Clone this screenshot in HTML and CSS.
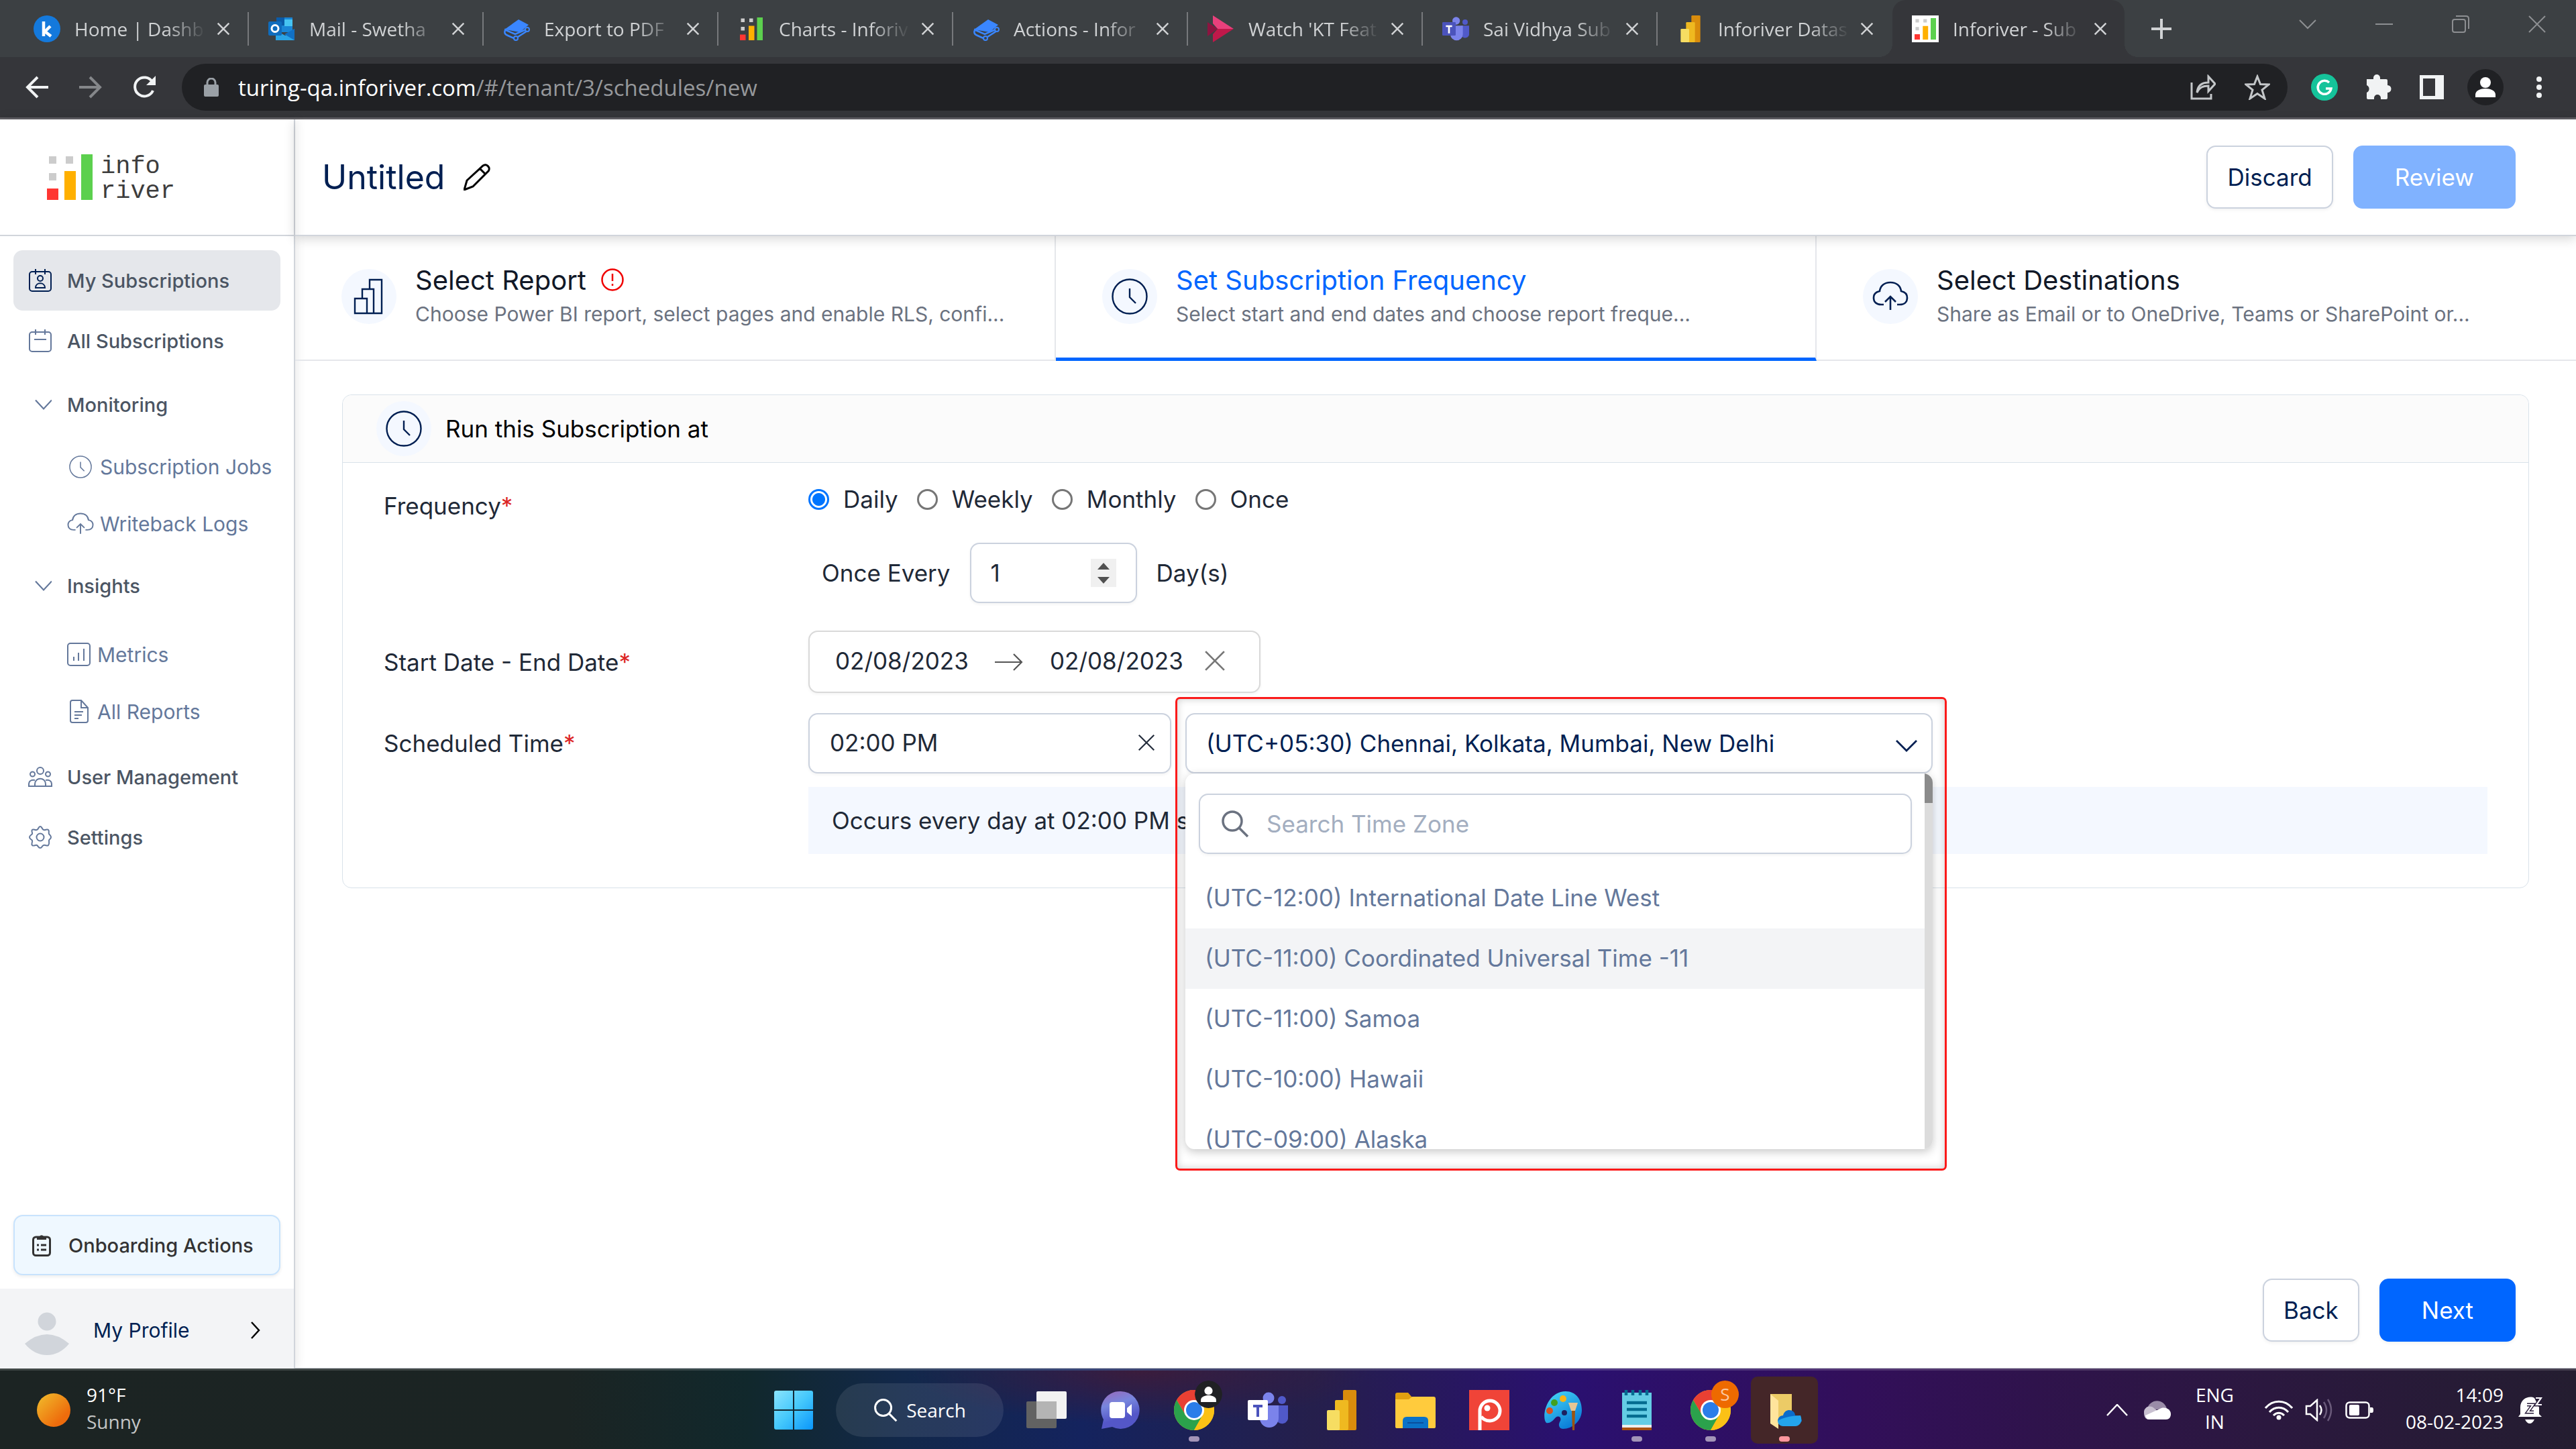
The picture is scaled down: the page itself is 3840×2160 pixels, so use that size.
FILE: index.html
```html
<!DOCTYPE html>
<html lang="en">
<head>
<meta charset="utf-8">
<title>Inforiver - Subscriptions</title>
<link rel="stylesheet" href="styles.css">
</head>
<body>
<svg class="defs" aria-hidden="true">
  <symbol id="x" viewBox="0 0 24 24"><path d="M2 2l20 20M22 2L2 22" fill="none" stroke="currentColor" stroke-width="3"/></symbol>
  <symbol id="thin-x" viewBox="0 0 30 30"><path d="M2 2l26 26M28 2L2 28" fill="none" stroke="currentColor" stroke-width="2.6"/></symbol>
  <symbol id="chev" viewBox="0 0 34 34"><path d="M25 10.500l12 13 12-13" transform="translate(-17 0)" fill="none" stroke="currentColor" stroke-width="2.200"/></symbol>
  <symbol id="clock" viewBox="0 0 54 54"><circle cx="27" cy="27" r="25.500" fill="none" stroke="currentColor" stroke-width="2.400"/><path d="M27 15v13l9 9" fill="none" stroke="currentColor" stroke-width="2.400"/></symbol>
  <symbol id="cloud" viewBox="0 0 54 54"><path d="M17 39h-4C6 39 2 35 2 29c0-6 4-9 9-10C12 11 18 6 27 6s15 5 16 13c5 1 9 4 9 10 0 6-4 10-11 10h-4" fill="none" stroke="currentColor" stroke-width="2.600"/><path d="M27 47V27m-8 8l8-8 8 8" fill="none" stroke="currentColor" stroke-width="2.600"/></symbol>
  <symbol id="cube" viewBox="0 0 40 40"><path d="M23 6L38 14 25 25 2 21z" fill="#3a86ff"/><path d="M2 21l16 7 16-7M4 20c-3 5-2 8 3 10l9 4M36 17l1 4M36 23l-14 9" fill="none" stroke="#3a86ff" stroke-width="2.500"/><circle cx="36" cy="21" r="3" fill="#3c4043" stroke="#3a86ff" stroke-width="2"/><circle cx="19" cy="34" r="3" fill="#3c4043" stroke="#3a86ff" stroke-width="2"/></symbol>
  <symbol id="bars" viewBox="0 0 68 68"><path fill="#ccc" d="M3 3h11v11H3zM28 3h11v11H28zM3 28h11v11H3z"/><path fill="#ff3632" d="M0 51h17v17H0z"/><path fill="#ffb000" d="M26 25h17v43H26z"/><path fill="#5cd04e" d="M51 0h17v68H51z"/></symbol>
  <symbol id="teams" viewBox="0 0 60 60"><circle cx="51" cy="15" r="6" fill="#5059c9"/><path fill="#5059c9" d="M42 23h18v16a9 9 0 01-18 4z"/><circle cx="31" cy="12" r="8.500" fill="#7b83eb"/><path fill="#7b83eb" d="M18 23h28v19a14 14 0 01-28 0z"/><rect y="15" width="30" height="30" rx="2" fill="var(--tile)"/><path d="M8 22h14v4h-5v14h-4V26H8z" fill="var(--letter)"/></symbol>
  <symbol id="pbi" viewBox="0 0 60 60"><rect x="32" width="20" height="60" rx="2" fill="#d98c0c"/><rect x="20" y="15" width="20" height="45" rx="2" fill="#efb920"/><rect x="8" y="30" width="19" height="30" rx="2" fill="#f6dd62"/></symbol>
  <symbol id="chrome" viewBox="0 0 60 60"><circle cx="30" cy="30" r="30" fill="#fbc116"/><path fill="#e94033" d="M30 30H56L56 15A30 30 0 004 15L17 37z"/><path fill="#2ba24c" d="M30 30L17 37 4 15A30 30 0 0030 60L43 37z"/><path fill="#fbc116" d="M30 60L43 37 43 15H56A30 30 0 0130 60z"/><circle cx="30" cy="30" r="15" fill="#fff"/><circle cx="30" cy="30" r="12" fill="#2b7de9"/></symbol>
  <symbol id="mag" viewBox="0 0 42 42"><circle cx="17" cy="17" r="14" fill="none" stroke="currentColor" stroke-width="3.500"/><path d="M27 27l13 13" stroke="currentColor" stroke-width="3.500"/></symbol>
  <symbol id="person" viewBox="0 0 54 54"><circle cx="27" cy="27" r="27" fill="#202124"/><circle cx="27" cy="20" r="8" fill="#fff"/><path d="M12 42v-4c0-6 8-9 15-9s15 3 15 9v4z" fill="#fff"/></symbol>
</svg>

<header class="browser">
  <div class="tabstrip">
    <div class="tab"><svg class="fav" viewBox="0 0 40 40"><circle cx="20" cy="20" r="20" fill="#1479dc"/><path d="M15 9v22M25 16l-8 8 9 7" fill="none" stroke="#fff" stroke-width="4.500"/></svg><span>Home | Dashb</span><button aria-label="Close tab"><svg><use href="#x"/></svg></button></div>
    <div class="tab"><svg class="fav" viewBox="0 0 40 40"><path fill="#1a86d6" d="M12 3h24v22H12z"/><path fill="#46c4f2" d="M24 6h12v10H24z"/><path fill="#0a5ba8" d="M12 3h12v12H12z"/><path fill="#2aa4e6" d="M11 22l14 8 14-10v17H11z"/><path fill="#1170c4" d="M39 20v17L24 28z"/><rect y="9" width="20" height="21" rx="2" fill="#0f6cbd"/><circle cx="10" cy="19.500" r="5" fill="none" stroke="#fff" stroke-width="3"/></svg><span>Mail - Swetha</span><button aria-label="Close tab"><svg><use href="#x"/></svg></button></div>
    <div class="tab"><svg class="fav"><use href="#cube"/></svg><span>Export to PDF</span><button aria-label="Close tab"><svg><use href="#x"/></svg></button></div>
    <div class="tab"><svg class="fav small"><use href="#bars"/></svg><span>Charts - Inforiv</span><button aria-label="Close tab"><svg><use href="#x"/></svg></button></div>
    <div class="tab"><svg class="fav"><use href="#cube"/></svg><span>Actions - Infor</span><button aria-label="Close tab"><svg><use href="#x"/></svg></button></div>
    <div class="tab"><svg class="fav" viewBox="0 0 40 40"><path fill="#e8407c" d="M8 0l31 20H15L8 12z"/><path fill="#c0184a" d="M39 20L8 40V28l7-8z"/><path fill="#8c1440" d="M0 10l15 10L0 31z"/></svg><span>Watch 'KT Feat</span><button aria-label="Close tab"><svg><use href="#x"/></svg></button></div>
    <div class="tab"><svg class="fav"><use href="#teams"/></svg><span>Sai Vidhya Sub</span><button aria-label="Close tab"><svg><use href="#x"/></svg></button></div>
    <div class="tab last"><svg class="fav"><use href="#pbi"/></svg><span>Inforiver Datas</span><button aria-label="Close tab"><svg><use href="#x"/></svg></button></div>
    <div class="tab active"><svg class="fav boxed"><use href="#bars"/></svg><span>Inforiver - Sub</span><button aria-label="Close tab"><svg><use href="#x"/></svg></button></div>
    <button class="newtab" aria-label="New tab"><svg viewBox="0 0 30 30"><path d="M15 0v30M0 15h30" stroke="currentColor" stroke-width="4"/></svg></button>
    <div class="wincontrols">
      <button aria-label="Search tabs"><svg viewBox="0 0 26 26"><path d="M1 7l12 12L25 7"/></svg></button>
      <button aria-label="Minimize"><svg viewBox="0 0 26 26"><path d="M0 13h26"/></svg></button>
      <button aria-label="Restore"><svg viewBox="0 0 26 26"><rect x="1" y="6" width="19" height="19" rx="3"/><path d="M6 1h15q4 0 4 4v15"/></svg></button>
      <button aria-label="Close"><svg viewBox="0 0 26 26"><path d="M1 1l24 24M25 1L1 25"/></svg></button>
    </div>
  </div>
  <div class="toolbar">
    <div class="navbtns">
      <button aria-label="Back"><svg viewBox="0 0 34 34"><path d="M34 17H3M18 2L3 17l15 15" fill="none" stroke="currentColor" stroke-width="4"/></svg></button>
      <button class="dim" aria-label="Forward"><svg viewBox="0 0 34 34"><path d="M0 17h31M16 2l15 15-15 15" fill="none" stroke="currentColor" stroke-width="4"/></svg></button>
      <button aria-label="Reload"><svg viewBox="0 0 34 34"><path d="M29 9A14 14 0 1030 22" fill="none" stroke="currentColor" stroke-width="4"/><path d="M34 0v14H20z" fill="currentColor"/></svg></button>
    </div>
    <div class="omnibox">
      <svg class="lock" viewBox="0 0 22 28"><rect y="10" width="22" height="18" rx="2" fill="#9aa0a6"/><path d="M5 11V7a6 6 0 0112 0v4" fill="none" stroke="#9aa0a6" stroke-width="3"/></svg>
      <p class="url">turing-qa.inforiver.com<span>/#/tenant/3/schedules/new</span></p>
      <button aria-label="Share"><svg viewBox="0 0 38 38"><path d="M2 12v24h29v-7M10 27c1-10 7-15 17-15V3l10 11-10 11v-8c-8 0-13 2-17 10z" fill="none" stroke="currentColor" stroke-width="3"/></svg></button>
      <button aria-label="Bookmark"><svg viewBox="0 0 38 38"><path d="M19 3l4.500 11.500L36 15l-10 8 4 13-11-7.500L8 36l4-13-10-8 12.500-.5z" fill="none" stroke="currentColor" stroke-width="3"/></svg></button>
    </div>
    <div class="exts">
      <svg viewBox="0 0 40 40"><circle cx="20" cy="20" r="20" fill="#15c39a"/><path d="M27 13a10 10 0 103 9h-8" fill="none" stroke="#fff" stroke-width="3.500"/></svg>
      <svg viewBox="0 0 40 40"><path fill="#f1f3f4" d="M3 8h10V6a5 5 0 0110 0v2h9q2 0 2 2v7a5.500 5.500 0 010 11v8q0 2-2 2h-8v-2a5 5 0 00-10 0v2H5q-2 0-2-2v-8a6 6 0 000-11z"/></svg>
      <svg viewBox="0 0 40 40"><path fill="#f1f3f4" fill-rule="evenodd" d="M2 2h36v36H2zM7 7v26h18V7z"/></svg>
      <svg class="me"><use href="#person"/></svg>
      <svg viewBox="0 0 40 40"><g fill="#f1f3f4"><circle cx="20" cy="8" r="4"/><circle cx="20" cy="20" r="4"/><circle cx="20" cy="32" r="4"/></g></svg>
    </div>
  </div>
</header>

<div class="app">
  <aside class="sidebar">
    <a class="brand" href="#"><svg><use href="#bars"/></svg><span>info<br>river</span></a>
    <nav>
      <a class="item current" href="#"><svg viewBox="0 0 34 34"><g fill="none" stroke="#001f52" stroke-width="2"><rect x="1" y="4" width="32" height="29" rx="4"/><path d="M10 0v8M24 0v8M10 28c0-9 14-9 14 0z"/><circle cx="17" cy="14" r="4"/></g></svg>My Subscriptions</a>
      <a class="item" href="#"><svg viewBox="0 0 34 34"><g fill="none" stroke="currentColor" stroke-width="2"><rect x="1" y="4" width="32" height="29" rx="4"/><path d="M10 0v8M24 0v8M8 15h18"/></g></svg>All Subscriptions</a>
      <button class="item group"><svg><use href="#chev" x="2"/></svg>Monitoring</button>
      <div class="sub">
        <a href="#"><svg class="ic34"><use href="#clock"/></svg>Subscription Jobs</a>
        <a href="#"><svg><use href="#cloud"/></svg>Writeback Logs</a>
      </div>
      <button class="item"><svg><use href="#chev" x="2"/></svg>Insights</button>
      <div class="sub spaced">
        <a href="#"><svg viewBox="0 0 36 36"><g fill="none" stroke="currentColor" stroke-width="2"><rect x="1" y="1" width="33" height="33" rx="4"/><path d="M10 27v-6M17 27V15M25 27V9"/></g></svg>Metrics</a>
        <a href="#"><svg viewBox="0 0 36 36"><g fill="none" stroke="currentColor" stroke-width="2"><path d="M8 1h13l10 11v19q0 3-3 3H8q-3 0-3-3V4q0-3 3-3zM21 1v11h10M11 18h13M11 23h11M11 28h6"/></g></svg>All Reports</a>
      </div>
      <a class="item" href="#"><svg class="wide" viewBox="0 0 36 30"><g fill="none" stroke="currentColor" stroke-width="2"><circle cx="18" cy="6" r="5"/><circle cx="6.500" cy="11" r="3.500"/><circle cx="29.500" cy="11" r="3.500"/><path d="M10 29v-3c0-11 16-11 16 0v3zM10 29H1v-3c0-5 4-7 9-6M26 29h9v-3c0-5-4-7-9-6"/></g></svg>User Management</a>
      <a class="item" href="#"><svg viewBox="0 0 34 34"><g fill="none" stroke="currentColor" stroke-width="2"><path d="M17 1c3 0 2 4 5 5s5-2 7 0 0 4 1 6 3 2 3 5-3 3-3 5 1 5-1 7-4-1-7 0-2 4-5 4-3-3-5-4-5 2-7 0 1-5 0-7-4-2-4-5 3-3 4-5-2-4 0-6 4 1 7 0 2-5 5-5z"/><circle cx="17" cy="17" r="5.500"/></g></svg>Settings</a>
    </nav>
    <button class="onboard"><svg viewBox="0 0 28 34"><rect x="1.500" y="5" width="25" height="27.500" rx="4" fill="none" stroke="#333" stroke-width="3"/><path d="M7 4h4a3.500 3.500 0 016 0h4v5H7z" fill="#333"/><path d="M7 17h3m3 0h8M7 24h3m3 0h8" stroke="#333" stroke-width="3"/></svg>Onboarding Actions</button>
    <button class="profile"><svg class="avatar" viewBox="0 0 66 66"><circle cx="33" cy="14" r="13.500" fill="#d1d5db"/><path d="M0 47q33-28 66 0-14 17-33 17T0 47z" fill="#d1d5db"/></svg><span>My Profile</span><svg class="go" viewBox="0 0 14 26"><path d="M1 1l11 12L1 25" fill="none" stroke="#000" stroke-width="2.500"/></svg></button>
  </aside>

  <main>
    <div class="titlebar">
      <h1>Untitled</h1>
      <button class="edit" aria-label="Rename"><svg viewBox="0 0 40 40"><path d="M1 39l4-14L29 3c5-4 12 3 8 8L14 34zM24 7l9 9" fill="none" stroke="#000" stroke-width="3"/></svg></button>
      <button class="btn end">Discard</button>
      <button class="btn primary faded" disabled>Review</button>
    </div>

    <div class="steps">
      <a class="step" href="#"><span class="bubble"><svg viewBox="0 0 54 54"><g fill="none" stroke="currentColor" stroke-width="2.400"><path d="M6 30h18v22H6z M17 30V16h17v36M28 16V2h18v50H24"/></g></svg></span><span class="txt"><strong>Select Report <svg viewBox="0 0 34 34"><circle cx="17" cy="17" r="15.500" fill="none" stroke="#f00000" stroke-width="2.500"/><path d="M17 8v11m0 4v3" stroke="#f00000" stroke-width="2.500"/></svg></strong><small>Choose Power BI report, select pages and enable RLS, confi...</small></span></a>
      <a class="step on" href="#"><span class="bubble"><svg><use href="#clock"/></svg></span><span class="txt"><strong>Set Subscription Frequency</strong><small>Select start and end dates and choose report freque...</small></span></a>
      <a class="step" href="#"><span class="bubble"><svg><use href="#cloud"/></svg></span><span class="txt"><strong>Select Destinations</strong><small>Share as Email or to OneDrive, Teams or SharePoint or...</small></span></a>
    </div>

    <section class="card">
      <div class="cardhead"><span class="bubble"><svg><use href="#clock"/></svg></span><h2>Run this Subscription at</h2></div>
      <form class="fields">
        <span class="label first">Frequency<b>*</b></span>
        <div>
          <div class="radios">
            <label><input type="radio" name="freq" checked>Daily</label>
            <label><input type="radio" name="freq">Weekly</label>
            <label><input type="radio" name="freq">Monthly</label>
            <label><input type="radio" name="freq">Once</label>
          </div>
          <div class="every">
            <label for="every">Once Every</label>
            <div class="box number"><input id="every" type="text" value="1"><span class="spin"><button type="button" aria-label="Increase"></button><button type="button" aria-label="Decrease"></button></span></div>
            <span>Day(s)</span>
          </div>
        </div>
        <label class="label dates" for="start">Start Date - End Date<b>*</b></label>
        <div class="box range">
          <input id="start" type="text" value="02/08/2023">
          <svg class="arrow" viewBox="0 0 42 26"><path d="M0 13h40M28 1l12 12-12 12" fill="none" stroke="#555" stroke-width="2.200"/></svg>
          <input type="text" value="02/08/2023" aria-label="End date">
          <button type="button" class="clear" aria-label="Clear dates"><svg><use href="#thin-x"/></svg></button>
        </div>
        <label class="label" for="time">Scheduled Time<b>*</b></label>
        <div class="when">
          <div class="box time"><input id="time" type="text" value="02:00 PM"><button type="button" class="clear dark" aria-label="Clear time"><svg><use href="#thin-x"/></svg></button></div>
          <div class="zone">
            <select class="box" aria-label="Time zone"><option>(UTC+05:30) Chennai, Kolkata, Mumbai, New Delhi</option></select>
            <svg class="zchev" viewBox="0 0 32 18"><path d="M1 1l15 15L31 1" fill="none" stroke="#001f52" stroke-width="2.800"/></svg>
            <div class="menu">
              <div class="scroll">
                <label class="box search"><svg><use href="#mag"/></svg><input type="text" placeholder="Search Time Zone" aria-label="Search Time Zone"></label>
                <ul role="listbox" aria-label="Time zones">
                  <li role="option">(UTC-12:00) International Date Line West</li>
                  <li role="option" class="hover">(UTC-11:00) Coordinated Universal Time -11</li>
                  <li role="option">(UTC-11:00) Samoa</li>
                  <li role="option">(UTC-10:00) Hawaii</li>
                  <li role="option">(UTC-09:00) Alaska</li>
                </ul>
              </div>
              <span class="track"></span>
            </div>
            <span class="callout"></span>
          </div>
        </div>
        <p class="summary">Occurs every day at 02:00 PM s</p>
      </form>
    </section>

    <div class="actions">
      <button class="btn">Back</button>
      <button class="btn primary next">Next</button>
    </div>
  </main>
</div>

<footer class="taskbar">
  <button class="weather"><svg viewBox="0 0 50 50"><defs><linearGradient id="sun" x1="0" y1="0" x2="1" y2="1"><stop offset=".1" stop-color="#f0b428"/><stop offset=".75" stop-color="#ee6c0c"/></linearGradient></defs><circle cx="25" cy="25" r="25" fill="url(#sun)"/></svg><span>91°F<br><i>Sunny</i></span></button>
  <div class="dock">
    <button aria-label="Start"><svg viewBox="0 0 60 60"><defs><linearGradient id="win" x1="0" y1="0" x2="1" y2="1"><stop offset="0" stop-color="#8ae4fd"/><stop offset=".5" stop-color="#45c8fc"/><stop offset="1" stop-color="#0a96fb"/></linearGradient></defs><path fill="url(#win)" d="M1 4q0-3 3-3h25v28H1zM31 1h25q3 0 3 3v25H31zM1 31h28v28H4q-3 0-3-3zM31 31h28v25q0 3-3 3H31z"/></svg></button>
    <button class="find"><svg><use href="#mag"/></svg>Search</button>
    <button aria-label="Task view"><svg viewBox="0 0 60 60"><rect x="15" y="2" width="45" height="41" rx="2" fill="#f2f2f2"/><rect y="17" width="45" height="40" rx="2" fill="#626262"/><path fill="#b4b4b4" d="M15 17h30v26H15z"/></svg></button>
    <button aria-label="Chat"><svg viewBox="0 0 60 60"><defs><linearGradient id="chat" x1="0" y1="0" x2=".3" y2="1"><stop offset="0" stop-color="#9a68b8"/><stop offset=".4" stop-color="#7786de"/><stop offset=".8" stop-color="#5457c8"/></linearGradient></defs><path fill="url(#chat)" d="M30 2a28 28 0 11-12 53L2 58l3-14A28 28 0 0130 2z"/><rect x="14" y="18" width="23" height="24" rx="4" fill="#fff"/><path fill="#fff" d="M40 27l7-6v18l-7-6z"/></svg></button>
    <button class="open" aria-label="Chrome"><svg><use href="#chrome"/></svg><svg class="badge"><use href="#person"/></svg></button>
    <button class="teams-task" aria-label="Teams"><svg><use href="#teams"/></svg></button>
    <button aria-label="Power BI"><svg><use href="#pbi"/></svg></button>
    <button aria-label="File Explorer"><svg viewBox="0 0 60 60"><path fill="#e0a010" d="M0 7q0-3 3-3h16l6 7h33v9H0z"/><path fill="#ffcb3d" d="M0 14h20l5-4h32q3 0 3 3v42q0 2-3 2H3q-3 0-3-2z"/><path fill="#0a72c8" d="M11 57V46q0-6 6-6h26q6 0 6 6v11z"/><path fill="#0a4f9c" d="M18 48h24v2H18z"/></svg></button>
    <button aria-label="PicPick"><svg viewBox="0 0 60 60"><path fill="#f04438" d="M0 0h60v60H0z"/><path d="M16 60V31a15 15 0 1115 15c-7 0-10-3-13-6" fill="none" stroke="#fff" stroke-width="5"/><circle cx="27" cy="27" r="4.500" fill="#fff"/></svg></button>
    <button aria-label="Paint"><svg viewBox="0 0 60 60"><defs><linearGradient id="pal" x1="0" y1="0" x2=".6" y2="1"><stop offset="0" stop-color="#4adcf8"/><stop offset="1" stop-color="#0a7cd8"/></linearGradient></defs><path fill="url(#pal)" d="M34 2c15 0 24 12 24 28S44 58 30 58c-6 0-8-6-4-12 2-6-3-8-7-5-5 6-9 9-14 8C-3 40 6 2 34 2z"/><circle cx="30" cy="13" r="5" fill="#f8b414"/><circle cx="17" cy="19" r="5" fill="#42a020"/><circle cx="10" cy="31" r="5" fill="#d85020"/><circle cx="32" cy="34" r="4" fill="#1c2060"/><path fill="#e6c694" d="M38 19h14l-4 12h-6z"/><path fill="#9c5410" d="M43 31h5l-1 29h-3z"/></svg></button>
    <button class="open" aria-label="Notepad"><svg viewBox="0 0 60 60"><path fill="#64cce4" d="M8 4h44v50H8z"/><path fill="#eee" d="M8 52h44v4H8z"/><path fill="#a85010" d="M8 56h44v4H8z"/><path d="M14 0v8m10-8v8m11-8v8m10-8v8M15 19h30M15 29h30M15 39h30" stroke="#046c90" stroke-width="4.500"/></svg></button>
    <button class="open" aria-label="Chrome, second profile"><svg><use href="#chrome"/></svg><span class="badge s">S</span></button>
    <button class="open focus" aria-label="OneDrive folder"><svg viewBox="0 0 60 60"><path fill="#eccb66" d="M9 6h32v42H18z"/><path fill="#ffe49c" d="M9 6l12 10v42L9 50z"/><path fill="#0a6ccc" d="M20 47c0-6 4-9 8-9 3-12 18-9 18 0 6 0 10 4 10 9z"/><path fill="#24a4ec" d="M20 46c6-4 20-8 34-8 4 10-2 16-8 16H28c-5 0-8-4-8-8z"/></svg></button>
  </div>
  <div class="tray">
    <svg class="t32" viewBox="0 0 32 18"><path d="M1 17L16 1l15 16" fill="none" stroke="#fff" stroke-width="2.500"/></svg>
    <svg class="t40" viewBox="0 0 40 28"><path fill="#9a8ca8" d="M4 14C8-4 30-4 34 12z"/><path fill="#c8c0d0" d="M0 17c0-8 10-12 16-5l8 6-18 10c-4-1-6-4-6-11z"/><path fill="#fff" d="M2 22l24-11c8-2 14 3 14 9 0 5-3 8-7 8H8c-3 0-5-2-6-6z"/></svg>
    <span class="lang">ENG<br>IN</span>
    <svg class="t42" viewBox="0 0 42 30"><g fill="none" stroke="#fff" stroke-width="3"><path d="M1 12C12-1 30-1 41 12M7 18c8-9 20-9 28 0M13 23c5-5 11-5 16 0"/></g><circle cx="21" cy="26" r="3.500" fill="#fff"/></svg>
    <svg class="t42" viewBox="0 0 42 34"><path d="M2 11h6l10-9v30l-10-9H2z" fill="none" stroke="#fff" stroke-width="2.500"/><path d="M22 10q5 7 0 14" fill="none" stroke="#fff" stroke-width="2.500"/><path d="M28 5q8 12 0 24M34 1q10 16 0 32" fill="none" stroke="#6a5a7a" stroke-width="2.500"/></svg>
    <svg class="t42" viewBox="0 0 42 26"><rect x="1.500" y="1.500" width="34" height="23" rx="5" fill="none" stroke="#fff" stroke-width="2.500"/><rect x="6" y="5" width="15" height="16" rx="2" fill="#fff"/><path fill="#fff" d="M37 9h3q2 0 2 4t-2 4h-3z"/></svg>
    <span class="clock">14:09<br>08-02-2023</span>
    <svg class="t36" viewBox="0 0 36 40"><path fill="#fff" d="M3 18C2 2 17-2 24 2l7 14v10l4 4H0l3-4zM10 34h14q-3 6-7 6t-7-6z"/><path d="M13 12h9l-8 11h9M26 2h8l-7 10h8" fill="none" stroke="#271a38" stroke-width="5"/><path d="M13 12h9l-8 11h9M26 2h8l-7 10h8" fill="none" stroke="#fff" stroke-width="2.200"/></svg>
  </div>
</footer>
</body>
</html>
```
FILE: styles.css
```css
* { box-sizing: border-box; }
body {
  margin: 0;
  min-height: 100vh;
  display: flex;
  flex-direction: column;
  background: #fff;
  font-family: Inter, "Liberation Sans", sans-serif;
  font-size: 35px;
  color: #1f2937;
  --tile: #4b53bc;
  --letter: #fff;
}
button, input, select { font: inherit; color: inherit; border: 0; background: none; padding: 0; margin: 0; }
a { color: inherit; text-decoration: none; }
svg { display: block; flex: none; }
h1, h2, p, ul { margin: 0; padding: 0; font-weight: 400; }
.defs { position: absolute; width: 0; height: 0; }

/* Browser window */
.browser { font-family: "Open Sans", "Noto Sans", sans-serif; color: #d0d2d4; border-bottom: 3px solid #5f5e63; }
.tabstrip { display: flex; align-items: center; height: 85px; padding-left: 21px; background: #3c4043; font-size: 28px; }
.tab { display: flex; align-items: center; width: 350px; height: 50px; padding: 0 26px 0 29px; border-right: 2px solid #77797c; }
.tab span { flex: 1; margin: 0 16px 0 21px; overflow: hidden; white-space: nowrap; -webkit-mask-image: linear-gradient(90deg, #000 70%, transparent); mask-image: linear-gradient(90deg, #000 70%, transparent); }
.tab button svg { width: 20px; height: 20px; }
.tab.last { border-color: transparent; }
.tab.active { position: relative; width: 346px; height: 85px; border: 0; border-radius: 20px 20px 0 0; background: #35363a; }
.tab.active::before, .tab.active::after { content: ""; position: absolute; bottom: 0; width: 20px; height: 20px; }
.tab.active::before { left: -20px; background: radial-gradient(circle at 0 0, transparent 20px, #35363a 20px); }
.tab.active::after { right: -20px; background: radial-gradient(circle at 100% 0, transparent 20px, #35363a 20px); }
.fav { width: 40px; height: 40px; }
.fav.small { padding: 3px; }
.fav.boxed { padding: 4px; background: #fff; }
.teams-task { --tile: #fff; --letter: #4b53bc; }
.newtab { margin-left: 40px; }
.newtab svg { width: 30px; height: 30px; }
.wincontrols { display: flex; gap: 88px; margin: 0 45px 14px auto; }
.wincontrols svg { width: 26px; height: 26px; fill: none; stroke: #8d8f92; stroke-width: 2; }
.toolbar { display: flex; align-items: center; height: 90px; padding: 0 35px 0 38px; background: #35363a; }
.navbtns { display: flex; gap: 46px; width: 233px; color: #f1f3f4; }
.navbtns .dim { color: #85878a; }
.navbtns svg { width: 34px; height: 34px; }
.omnibox { flex: 1; display: flex; align-items: center; gap: 43px; height: 70px; padding: 0 26px 0 33px; border-radius: 35px; background: #202124; color: #c4c7c9; }
.omnibox button svg { width: 38px; height: 38px; }
.lock { width: 22px; height: 28px; }
.url { flex: 1; margin-left: -14px; font-size: 33px; color: #fff; }
.url span { color: #96989b; }
.exts { display: flex; align-items: center; gap: 40px; margin-left: 35px; }
.exts svg { width: 40px; height: 40px; }
.exts .me { width: 54px; height: 54px; margin: 0 -7px; }

/* App shell */
.app { flex: 1; display: flex; }
.sidebar { display: flex; flex-direction: column; width: 440px; border-right: 2px solid #d1d5db; box-shadow: 0 0 16px rgba(0, 0, 0, .12); }
.brand { display: flex; align-items: center; gap: 12px; height: 174px; padding: 0 70px; border-bottom: 2px solid #d1d5db; font: 37px/37px "Liberation Mono", monospace; color: #3d3d3d; }
.brand svg { width: 68px; height: 68px; }
.brand span { padding-top: 6px; }
nav { padding: 21px 20px 0; color: #64789b; }
.item { display: flex; align-items: center; gap: 23px; width: 100%; height: 90px; padding-left: 23px; border-radius: 14px; font-size: 29px; font-weight: 500; color: #4b5563; }
.item svg { width: 34px; height: 34px; color: #64789b; }
.item svg.wide { width: 38px; height: 30px; margin: 0 -2px; }
.current { background: #e5e7eb; }
.group { margin-top: 5px; }
.sub { padding: 5px 0; }
.sub a { display: flex; align-items: center; gap: 9px; height: 85px; padding-left: 80px; font-size: 30px; white-space: nowrap; }
.sub svg { width: 40px; height: 40px; }
.sub .ic34 { padding: 3px; }
.sub.spaced { padding: 15px 0 10px; }
.spaced svg { width: 36px; height: 36px; }
.onboard { display: flex; align-items: center; gap: 26px; height: 90px; margin: auto 20px 20px; padding-left: 26px; border: 2px solid #c8e3fd; border-radius: 14px; background: #eff8ff; box-shadow: 0 2px 5px rgba(0, 0, 0, .08); font-size: 29px; font-weight: 500; color: #333; white-space: nowrap; }
.onboard svg { width: 28px; height: 34px; }
.profile { display: flex; align-items: center; height: 119px; padding: 4px 50px 0 37px; background: #f3f4f6; font-size: 30px; color: #001f52; }
.profile .avatar { width: 66px; height: 66px; margin-top: 12px; }
.profile span { flex: 1; margin-left: 36px; text-align: left; }
.profile .go { width: 14px; height: 26px; }

main { flex: 1; display: flex; flex-direction: column; min-width: 0; border-bottom: 1px solid #c9ccd2; }
.titlebar { position: relative; display: flex; align-items: center; height: 174px; padding: 0 90px 0 40px; border-bottom: 2px solid #d1d5db; box-shadow: 0 4px 16px rgba(0, 0, 0, .16); color: #001f52; }
h1 { font-size: 50px; }
.edit { margin-left: 28px; }
.edit svg { width: 40px; height: 40px; }
.btn { height: 94px; padding: 0 29px; border: 2px solid #cbd2de; border-radius: 14px; box-shadow: 0 2px 5px rgba(0, 0, 0, .06); background: #fff; color: #001f52; }
.btn.primary { margin-left: 30px; padding: 0 60px; border-color: #06f; background: #06f; color: #fff; }
.btn.faded { border-color: #80b2ff; background: #80b2ff; box-shadow: none; }
.end { margin-left: auto; }
.steps { display: flex; }
.step { flex: 1; display: flex; align-items: flex-start; min-width: 0; height: 186px; padding: 49px 0 0 69px; border-right: 2px solid #e5e7eb; border-bottom: 2px solid #e5e7eb; }
.step:last-child { border-right: 0; }
.bubble { display: flex; align-items: center; justify-content: center; flex: none; width: 82px; height: 82px; border-radius: 50%; background: #f4f8ff; color: #001f52; }
.bubble svg { width: 54px; height: 54px; }
.txt { display: flex; flex-direction: column; margin-left: 28px; white-space: nowrap; }
.txt strong { display: flex; align-items: center; gap: 22px; height: 50px; margin-top: -9px; font-size: 40px; font-weight: 400; color: #111827; }
.txt strong svg { width: 34px; height: 34px; }
.txt small { height: 50px; line-height: 52px; font-size: 30px; color: #6b7280; }
.on { border-bottom: 5px solid #06f; }
.on .txt strong { color: #06f; }

/* Schedule form */
.card { margin: 50px 70px 0; border: 1px solid #d9e2ea; border-radius: 14px; }
.cardhead { display: flex; align-items: center; gap: 21px; height: 101px; padding-left: 50px; border-bottom: 1px solid #d9e2ea; border-radius: 14px 14px 0 0; background: #fbfbfb; color: #000; }
h2 { font-size: 35px; }
.fields { display: grid; grid-template-columns: 633px 1fr; align-items: center; padding: 26px 61px 50px; }
.label b { font-weight: 400; color: #dc2626; }
.first { align-self: start; line-height: 76px; }
.dates { padding-top: 12px; }
.radios { display: flex; gap: 28px; height: 56px; margin-bottom: 37px; }
.radios label { display: flex; align-items: center; gap: 21px; }
.radios input { appearance: none; width: 31px; height: 31px; border: 3px solid #767676; border-radius: 50%; }
.radios input:checked { border-color: #0075ff; background: radial-gradient(circle, #0075ff 9px, #fff 10px); }
.box { display: flex; align-items: center; height: 90px; border: 2px solid #cbd2de; border-radius: 14px; background: #fff; box-shadow: 0 2px 4px rgba(0, 0, 0, .05); }
.box input { flex: 1; min-width: 0; width: 0; outline: 0; }
.every { display: flex; align-items: center; gap: 29px; padding-left: 20px; }
.number { width: 249px; padding: 0 29px; }
.spin { display: flex; flex-direction: column; width: 38px; height: 42px; background: #f0f0f0; }
.spin button { flex: 1; display: flex; align-items: center; justify-content: center; }
.spin button::before { content: ""; border: 9px solid transparent; border-top: 0; border-bottom: 10px solid #505050; }
.spin button + button::before { border-top: 10px solid #505050; border-bottom: 0; }
.range { width: 674px; height: 93px; margin: 41px 0 30px; padding: 0 50px 4px 38px; border-color: #d9d9d9; }
.range input { flex: 0 0 200px; }
.arrow { width: 42px; height: 26px; margin: 4px 40px 0 38px; }
.clear { margin-left: auto; color: #777; }
.clear svg { width: 32px; height: 32px; }
.clear.dark { color: #27303f; }
.clear.dark svg { width: 26px; height: 26px; }
.when { display: flex; gap: 21px; }
.time { width: 541px; padding: 0 22px 2px 30px; }
.zone { position: relative; width: 1114px; }
.zone select { appearance: none; width: 100%; padding-left: 29px; color: #001f52; }
.zchev { position: absolute; right: 23px; top: 40px; width: 32px; height: 18px; }
.menu { position: absolute; z-index: 1; top: 90px; left: 0; right: 0; display: flex; height: 560px; overflow: hidden; border-radius: 14px; background: #fff; box-shadow: 0 4px 14px rgba(0, 0, 0, .22); color: #64789b; }
.scroll { flex: 1; }
.search { margin: 30px 19px 21px 20px; padding-left: 31px; gap: 26px; }
.search svg { width: 42px; height: 42px; color: #6b7280; }
.search input::placeholder { color: #a3aec0; opacity: 1; }
.menu ul { list-style: none; }
.menu li { height: 90px; padding-left: 29px; line-height: 88px; }
.menu .hover { background: #f3f4f6; }
.track { width: 12px; background: linear-gradient(#8b8b8b 44px, #dcdcdc 44px); }
.callout { position: absolute; z-index: 2; top: -24px; left: -15px; right: -21px; height: 706px; border: 3px solid #fb1a1a; border-radius: 7px; box-shadow: inset 0 0 12px rgba(0, 0, 0, .2); pointer-events: none; }
.summary { grid-column: 2; height: 100px; margin-top: 20px; padding-left: 35px; line-height: 100px; background: #f4f8ff; }
.actions { display: flex; justify-content: flex-end; margin-top: auto; padding: 0 90px 39px; }
.actions .btn.primary { padding: 0 61px; }

/* Desktop taskbar */
.taskbar {
  display: flex; align-items: center; justify-content: space-between; position: relative; height: 120px; padding: 0 50px 0 55px;
  border-top: 3px solid rgba(255, 255, 255, .16);
  background: radial-gradient(ellipse 340px 80px at 1700px 0, rgba(70, 26, 50, .75), transparent), linear-gradient(90deg, #1c2423 0, #1b2423 22%, #11282c 29%, #12284a 35%, #14235e 42%, #251f4c 51%, #2a1070 61%, #320f5a 72%, #2f134c 79%, #2b183f 88%, #241d30 100%) border-box;
  font-family: "Open Sans", "Noto Sans", sans-serif; font-size: 28px; line-height: 40px; color: #fff;
}
.weather { display: flex; align-items: center; gap: 24px; text-align: left; }
.weather span, .lang, .clock { padding-bottom: 6px; }
.weather svg { width: 50px; height: 50px; }
.weather i { font-style: normal; color: #c4c6c6; }
.dock { display: flex; align-items: center; gap: 10px; position: absolute; left: 30%; margin-left: -19px; }
.dock button { position: relative; display: flex; align-items: center; justify-content: center; width: 100px; height: 100px; border-radius: 10px; }
.dock svg { width: 60px; height: 60px; }
.dock .find { gap: 13px; width: 250px; height: 80px; margin: 0 4px 0 3px; border-radius: 40px; background: rgba(255, 255, 255, .09); }
.dock .find svg { width: 36px; height: 36px; }
.dock .badge { position: absolute; top: 6px; right: 8px; width: 41px; height: 41px; border-radius: 50%; }
.badge.s { background: #ee6a00; color: #fbc9a4; font-size: 26px; }
.open::after { content: ""; position: absolute; bottom: 3px; width: 16px; height: 8px; border-radius: 4px; background: #a394b8; }
.dock .focus { background: #442628; }
.focus::after { background: #ff969e; }
.tray { display: flex; align-items: center; gap: 18px; text-align: center; }
.t32 { width: 32px; height: 18px; margin-right: 6px; }
.t40 { width: 40px; height: 28px; margin-right: 19px; }
.t42 { width: 42px; height: 34px; }
.t36 { width: 36px; height: 40px; margin-left: 4px; }
.lang { margin-right: 28px; }
.clock { margin-left: 30px; text-align: right; }
```
